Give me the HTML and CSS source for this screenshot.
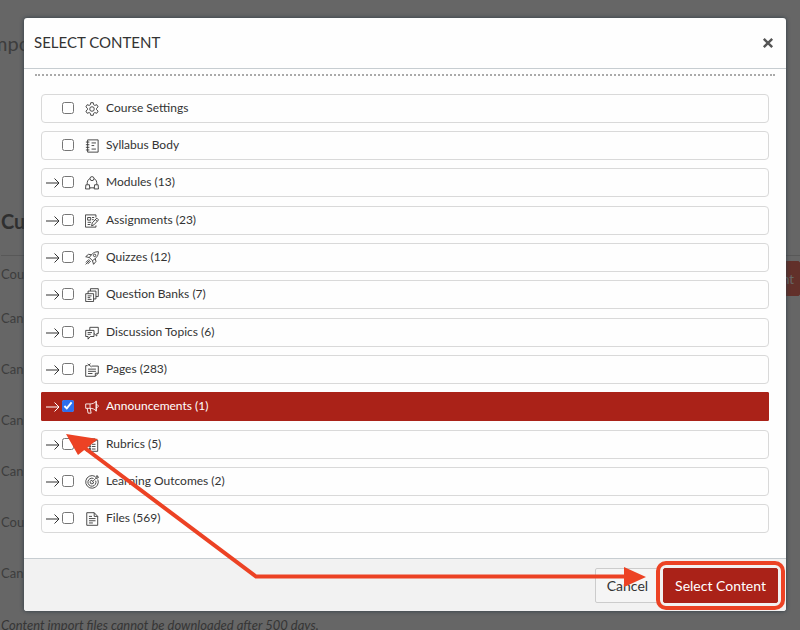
FILE: index.html
```html
<!DOCTYPE html>
<html lang="en">
<head>
    <meta charset="UTF-8">
    <meta name="viewport" content="width=device-width, initial-scale=1.0">
    <title>Select Content</title>
    <link rel="stylesheet" href="styles.css">
</head>
<body>
    <!-- shared icons -->
    <svg class="sprite" aria-hidden="true">
        <symbol id="arrow" viewBox="0 0 14 12"><path d="M0 6h13M8.500 1.500L13 6l-4.500 4.500"/></symbol>
        <symbol id="settings" viewBox="0 0 16 16"><path d="M6.600.8h2.800l.5 2.300 1.300.8 2.300-.8 1.500 2.500-1.800 1.600v1.600l1.800 1.600-1.500 2.500-2.300-.8-1.300.8-.5 2.300H6.600l-.5-2.300-1.300-.8-2.300.8L1 10.400l1.800-1.600V7.200L1 5.600l1.500-2.500 2.300.8 1.300-.8z"/><circle cx="8" cy="8" r="2.600"/></symbol>
        <symbol id="syllabus" viewBox="0 0 16 16"><path d="M3 1h12v14H3zM1 3.500h4M1 6.500h4M1 9.500h4M1 12.500h4M7.500 4.500h5M7.500 7.500h3M7.500 11.500h5"/></symbol>
        <symbol id="modules" viewBox="0 0 16 16"><path d="M5.500 3C3.300 4 2.300 6.500 2.500 9.500M10.500 3c2.200 1 3.200 3.500 3 6.500M5.300 13.500h5.400"/><circle cx="8" cy="3" r="2.300"/><path d="M1 10h4l.5 4.800H.6zM11 10h4l.4 4.800h-4.900z"/></symbol>
        <symbol id="assignments" viewBox="0 0 16 16"><path d="M12.500 4V1h-12v14h12v-2M3 4h3.500v3H3zM8 4h2.500M8 6.500h2M3 9.500h4M3 12h3M7.500 13.500l.8-3.300 5.200-5.500 2 2-5.300 5.700zM12 6.500l1.800 1.800"/></symbol>
        <symbol id="quizzes" viewBox="0 0 16 16"><path d="M15.300.8C11 .8 8 2.500 5 7.500L8.500 11c5-3 6.800-6 6.800-10.200zM7.300 4.300L4 3.800.8 6.500l4.200 1M11.700 8.700l.8 3.300-2.700 3.200-1.300-4.200M4.500 9.500L1 13M6.500 11.500L3 15M5.500 10.500l-4.800 4.800"/><circle cx="11" cy="5" r="1.400"/></symbol>
        <symbol id="banks" viewBox="0 0 16 16"><path d="M.8 6.500h9v9h-9zM3.500 6.500V3.500h9v9H9.800M6.200 3.500V.8h9v9h-2.700M3 9h4.500M3 11h3M3 13h4.500"/></symbol>
        <symbol id="discussion" viewBox="0 0 16 16"><path d="M.8 5h9.500v7H6l-2.500 3v-3H.8zM5.500 5V1.500h9.700v7h-1.700v3l-3.200-3M3 7.500h5M3 9.500h3.500"/></symbol>
        <symbol id="pages" viewBox="0 0 16 16"><path d="M3 3H.8v12.200h11l3.400-3.500V3.500H7.500M15.200 11.700h-3.400v3.500M3.500 7h9M3.500 9.500h9M3.500 12h5M3 1l4.500 3.500M6.200.6L4.300 2.800"/></symbol>
        <symbol id="announce" viewBox="0 0 16 16"><path d="M.8 4.500h5c3 0 5-1 7-3v11c-2-2-4-3-7-3h-5zM5.800 4.500v5M2.500 9.500l1 5.500H7l-1-5.500M12.800 1v12M12.800 5.300c3.200 0 3.200 3.400 0 3.400"/></symbol>
        <symbol id="rubrics" viewBox="0 0 16 16"><path d="M5 2.500H2v12.700h12.500V2.500h-3M5 1h6.500v3H5zM4.500 6.500h2v1.300h-2zM4.500 9h2v1.300h-2zM4.500 12h2v1.300h-2zM8 7.200h4M8 9.700h4M8 12.600h4"/></symbol>
        <symbol id="outcomes" viewBox="0 0 16 16"><path d="M11.500 1.600A7.200 7.200 0 1 0 14.600 5M9.800 4A4.600 4.600 0 1 0 12.200 6.500M8.500 6.200A2 2 0 1 0 9.800 7.800M8 8.200l4.500-4.500M12.500 3.700V1.800L14 .6V2.200h1.500l-1.200 1.500z"/></symbol>
        <symbol id="files" viewBox="0 0 16 16"><path d="M2 .8h8.500L14.500 5v10.200H2zM10.500.8V5h4M4.500 5h3.500M4.500 7.500h7.500M4.500 10h7.500M4.500 12.500h4.500"/></symbol>
    </svg>

    <main class="page">
        <h1>mpo</h1>
        <h2>Cu</h2>
        <ul class="jobs">
            <li class="job current"><span>Cou</span><button type="button" class="btn primary" aria-label="Select Content">nt</button></li>
            <li class="job">Can</li>
            <li class="job">Can</li>
            <li class="job">Can</li>
            <li class="job">Can</li>
            <li class="job">Cou</li>
            <li class="job">Can</li>
        </ul>
        <p class="note">Content import files cannot be downloaded after 500 days.</p>
    </main>

    <div class="overlay">
        <form class="modal" role="dialog" aria-labelledby="modal-title">
            <header class="modal-header">
                <h3 id="modal-title">SELECT CONTENT</h3>
                <button type="button" class="close" aria-label="Close"><svg viewBox="0 0 10 10"><path d="M1.500 1.500l7 7M8.500 1.500l-7 7"/></svg></button>
            </header>
            <div class="modal-body">
                <ul class="tree">
                    <li class="item"><span class="expand"></span><input type="checkbox" id="c1"><svg class="icon"><use href="#settings"/></svg><label for="c1">Course Settings</label></li>
                    <li class="item"><span class="expand"></span><input type="checkbox" id="c2"><svg class="icon"><use href="#syllabus"/></svg><label for="c2">Syllabus Body</label></li>
                    <li class="item"><svg class="expand"><use href="#arrow"/></svg><input type="checkbox" id="c3"><svg class="icon"><use href="#modules"/></svg><label for="c3">Modules (13)</label></li>
                    <li class="item"><svg class="expand"><use href="#arrow"/></svg><input type="checkbox" id="c4"><svg class="icon"><use href="#assignments"/></svg><label for="c4">Assignments (23)</label></li>
                    <li class="item"><svg class="expand"><use href="#arrow"/></svg><input type="checkbox" id="c5"><svg class="icon"><use href="#quizzes"/></svg><label for="c5">Quizzes (12)</label></li>
                    <li class="item"><svg class="expand"><use href="#arrow"/></svg><input type="checkbox" id="c6"><svg class="icon"><use href="#banks"/></svg><label for="c6">Question Banks (7)</label></li>
                    <li class="item"><svg class="expand"><use href="#arrow"/></svg><input type="checkbox" id="c7"><svg class="icon"><use href="#discussion"/></svg><label for="c7">Discussion Topics (6)</label></li>
                    <li class="item"><svg class="expand"><use href="#arrow"/></svg><input type="checkbox" id="c8"><svg class="icon"><use href="#pages"/></svg><label for="c8">Pages (283)</label></li>
                    <li class="item active"><svg class="expand"><use href="#arrow"/></svg><input type="checkbox" id="c9" checked><svg class="icon"><use href="#announce"/></svg><label for="c9">Announcements (1)</label></li>
                    <li class="item"><svg class="expand"><use href="#arrow"/></svg><input type="checkbox" id="c10"><svg class="icon"><use href="#rubrics"/></svg><label for="c10">Rubrics (5)</label></li>
                    <li class="item"><svg class="expand"><use href="#arrow"/></svg><input type="checkbox" id="c11"><svg class="icon"><use href="#outcomes"/></svg><label for="c11">Learning Outcomes (2)</label></li>
                    <li class="item"><svg class="expand"><use href="#arrow"/></svg><input type="checkbox" id="c12"><svg class="icon"><use href="#files"/></svg><label for="c12">Files (569)</label></li>
                </ul>
            </div>
            <footer class="modal-footer">
                <button type="button" class="btn">Cancel</button>
                <button type="button" class="btn primary marked">Select Content</button>
            </footer>
        </form>
    </div>

    <!-- arrow from the ticked row to the button -->
    <svg class="pointer" viewBox="0 0 800 630" aria-hidden="true">
        <path class="line" d="M82 446L256 576.500H628"/>
        <path class="head" d="M66 434l32 5-20 16zM624 567l22 10-22 10z"/>
    </svg>
</body>
</html>
```

FILE: styles.css
```css
*{
    box-sizing: border-box;
    padding: 0;
    margin: 0;
}
body{
    position: relative;
    min-height: 100vh;
    overflow: hidden;
    background: #fff;
    color: #2d3b45;
    font-family: Lato, "Liberation Sans", sans-serif;
    font-size: 12px;
    line-height: 16px;
}
ul{
    list-style: none;
}
svg{
    fill: none;
    stroke: currentColor;
}
.sprite{
    position: absolute;
    width: 0;
    height: 0;
}

/* page behind the dialog */
.page{
    height: 100vh;
    overflow: hidden;
    padding: 28px 0 0 1px;
    color: #999;
}
.page h1{
    margin-left: -10px;
    font-size: 20px;
    font-weight: normal;
    line-height: 30px;
}
.page h2{
    margin-top: 148px;
    padding-bottom: 19px;
    border-bottom: 1px solid #ddd;
    font-size: 20px;
    line-height: 30px;
    color: #777;
}
.job{
    height: 51px;
    padding-top: 4px;
    font-size: 13px;
}
.job.current{
    display: flex;
    justify-content: space-between;
    align-items: flex-start;
    height: 50px;
    padding-top: 5px;
}
.job.current span{
    padding-top: 5px;
}
.job .btn.primary{
    width: 40px;
    padding: 0 5px;
    border-color: #f5786a;
    background: #f5786a;
    font-size: 13px;
    text-align: right;
}
.note{
    padding-top: 5px;
    font-size: 13px;
    font-style: italic;
    white-space: nowrap;
    color: #888;
}

/* dialog */
.overlay{
    position: absolute;
    top: 0;
    left: 0;
    right: 0;
    min-height: 100%;
    padding: 18px 14px 18px 24px;
    background: rgba(0, 0, 0, .6);
}
.modal{
    border-radius: 3px;
    background: #fefefe;
    box-shadow: 0 0 4px #2d3b45;
}
.modal-header{
    display: flex;
    justify-content: space-between;
    align-items: center;
    height: 51px;
    padding: 0 12px 2px 10px;
    border-bottom: 1px solid #c7cdd1;
}
.modal-header h3{
    font-size: 15px;
    font-weight: normal;
    line-height: 20px;
    color: #333;
}
.close{
    width: 12px;
    height: 12px;
    margin-top: 2px;
    border: 0;
    background: none;
    color: #555;
}
.close svg{
    display: block;
    width: 12px;
    height: 12px;
    stroke-width: 2;
}
.modal-body{
    padding: 5px 11px 25px;
}
.tree{
    padding: 18px 6px 0;
    border-top: 2px dotted #aaa;
}
.item{
    display: flex;
    align-items: center;
    height: 29px;
    margin-bottom: 8px;
    padding: 0 0 2px 4px;
    border: 1px solid #d9d9d9;
    border-radius: 4px;
    color: #333;
}
.item:nth-child(3n){
    margin-bottom: 9px;
}
.item:last-child{
    margin-bottom: 0;
}
.item.active{
    border-color: #aa2218;
    border-radius: 1px;
    background: #aa2218;
    color: #fff;
}
.expand{
    width: 14px;
    height: 12px;
    margin: 2px 2px 0 0;
}
.item input{
    width: 12px;
    height: 12px;
    accent-color: #2f6fed;
}
.icon{
    width: 14px;
    height: 14px;
    margin: 3px 7px 0 11px;
}
.modal-footer{
    display: flex;
    justify-content: flex-end;
    gap: 3px;
    padding: 9px 8px 8px 0;
    border-top: 1px solid #c7cdd1;
    border-radius: 0 0 3px 3px;
    background: #f2f2f2;
}
.btn{
    height: 35px;
    padding: 0 11px;
    border: 1px solid #ccc;
    border-radius: 2px;
    background: #f5f5f5;
    font: 14px/20px Lato, "Liberation Sans", sans-serif;
    color: #333;
}
.btn.primary{
    border-color: #aa2218;
    background: #aa2218;
    color: #fff;
}
.marked{
    position: relative;
}
.marked::after{
    content: "";
    position: absolute;
    inset: -8px;
    border: 4px solid #ec4224;
    border-radius: 10px;
}
.pointer{
    position: absolute;
    top: 0;
    left: 0;
    width: 100%;
    pointer-events: none;
}
.pointer .line{
    stroke: #ec4224;
    stroke-width: 4;
}
.pointer .head{
    fill: #ec4224;
    stroke: none;
}
```
